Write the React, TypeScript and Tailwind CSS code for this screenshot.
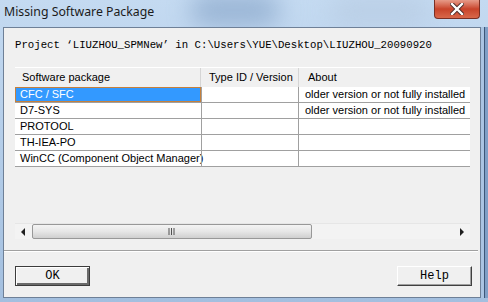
const rows = [
  { name: "CFC / SFC", about: "older version or not fully installed", selected: true },
  { name: "D7-SYS", about: "older version or not fully installed" },
  { name: "PROTOOL", about: "" },
  { name: "TH-IEA-PO", about: "" },
  { name: "WinCC (Component Object Manager)", about: "" },
];

function CloseButton() {
  return (
    <div className="absolute left-[434px] top-0 w-[46px] h-[19px] rounded-b-[4px] border border-t-0 border-[#7a2f24] bg-gradient-to-b from-[#e69a88] via-[#c8432a] to-[#d8674a] flex items-center justify-center">
      <svg width="14" height="12" viewBox="0 0 14 12">
        <path d="M2 1 L12 11 M12 1 L2 11" stroke="#4a2a28" strokeWidth="4.2" strokeLinecap="square" />
        <path d="M2 1 L12 11 M12 1 L2 11" stroke="#ffffff" strokeWidth="2.4" strokeLinecap="square" />
      </svg>
    </div>
  );
}

function Button({ label, isDefault }: { label: string; isDefault?: boolean }) {
  return (
    <div
      className={
        "h-[20px] w-[75px] flex items-center justify-center bg-[#f0f0f0] text-[12px] text-black font-['Liberation_Mono',monospace] " +
        (isDefault
          ? "border border-[#3c3c3c] shadow-[inset_1px_1px_0_#ffffff,inset_-2px_-2px_0_#6a6a6a]"
          : "border border-t-[#ffffff] border-l-[#ffffff] border-b-[#404040] border-r-[#404040] shadow-[inset_-1px_-1px_0_#a0a0a0]")
      }
    >
      {label}
    </div>
  );
}

export default function App() {
  return (
    <div className="relative w-[488px] h-[302px] overflow-hidden bg-gradient-to-b from-[#c4daf1] to-[#a3bfdf] font-['Liberation_Sans',Arial,sans-serif]">
      <div className="absolute left-[190px] top-[-6px] w-[90px] h-[32px] rounded-full bg-[#7d9cc2] opacity-60 blur-md" />
      <div className="absolute left-[330px] top-[-4px] w-[100px] h-[30px] rounded-full bg-[#b7cbe2] opacity-70 blur-md" />
      <div className="relative h-[27px] pl-[4px] pt-[4px] text-[12.3px] leading-[16px] text-[#1b1b1b] font-['Noto_Sans',sans-serif]">
        Missing Software Package
      </div>
      <CloseButton />
      <div className="relative flex">
        <div className="w-[3px]" />
        <div className="w-[478px] h-[271px] border border-[#6e8097] bg-[#f0f0f0] flex flex-col">
          <div className="mt-[10px] pl-[11px] h-[14px] leading-[14px] text-[10.7px] text-black font-['Liberation_Mono',monospace] whitespace-nowrap">
            Project ‘LIUZHOU_SPMNew’ in C:\Users\YUE\Desktop\LIUZHOU_20090920
          </div>
          <div className="mt-[15px] ml-[11px] w-[455px] h-[172px] flex flex-col text-[11px] text-black">
            <div className="h-[20px] flex border-t border-white bg-[#f0f0f0]">
              <div className="w-[186px] pl-[7px] flex items-center border-r border-[#d5d5d5]">Software package</div>
              <div className="w-[98px] pl-[8px] flex items-center border-r border-[#d5d5d5]">Type ID / Version</div>
              <div className="flex-1 pl-[9px] flex items-center">About</div>
            </div>
            {rows.map((r) => (
              <div key={r.name} className="h-[16px] flex bg-white border-b border-[#a0a0a0]">
                <div
                  className={
                    "w-[186px] flex items-center whitespace-nowrap " +
                    (r.selected ? "pl-[4px] bg-[#3399ff] text-white border border-[#c5803c]" : "pl-[5px]")
                  }
                >
                  {r.name}
                </div>
                <div className="w-[98px] border-l border-r border-[#a0a0a0]" />
                <div className="flex-1 pl-[6px] flex items-center whitespace-nowrap">{r.about}</div>
              </div>
            ))}
            <div className="flex-1" />
            <div className="h-[16px] flex items-center bg-[#f3f3f3] border-t border-[#e6e6e6]">
              <div className="w-[17px] flex items-center justify-center">
                <svg width="5" height="8" viewBox="0 0 5 8">
                  <path d="M4 0 L0 4 L4 8 Z" fill="#202020" />
                </svg>
              </div>
              <div className="w-[280px] h-[15px] rounded-[2px] border border-[#989898] bg-gradient-to-b from-[#f4f4f4] via-[#e6e6e6] to-[#cfcfcf] flex items-center justify-center">
                <svg width="8" height="7" viewBox="0 0 8 7">
                  <path d="M1 0 V7 M3.5 0 V7 M6 0 V7" stroke="#505050" strokeWidth="1" />
                </svg>
              </div>
              <div className="flex-1" />
              <div className="w-[17px] flex items-center justify-center">
                <svg width="5" height="8" viewBox="0 0 5 8">
                  <path d="M1 0 L5 4 L1 8 Z" fill="#202020" />
                </svg>
              </div>
            </div>
          </div>
          <div className="mt-[11px] mr-[2px] border-t border-[#a0a0a0] border-b border-b-white" />
          <div className="mt-[14px] px-[11px] flex justify-between pr-[8px]">
            <Button label="OK" isDefault />
            <Button label="Help" />
          </div>
        </div>
        <div className="w-[7px] flex">
          <div className="w-[3px] bg-[#aac4e2]" />
          <div className="w-px bg-[#3d5677]" />
          <div className="flex-1 bg-[#7f9fc6]" />
        </div>
      </div>
    </div>
  );
}
